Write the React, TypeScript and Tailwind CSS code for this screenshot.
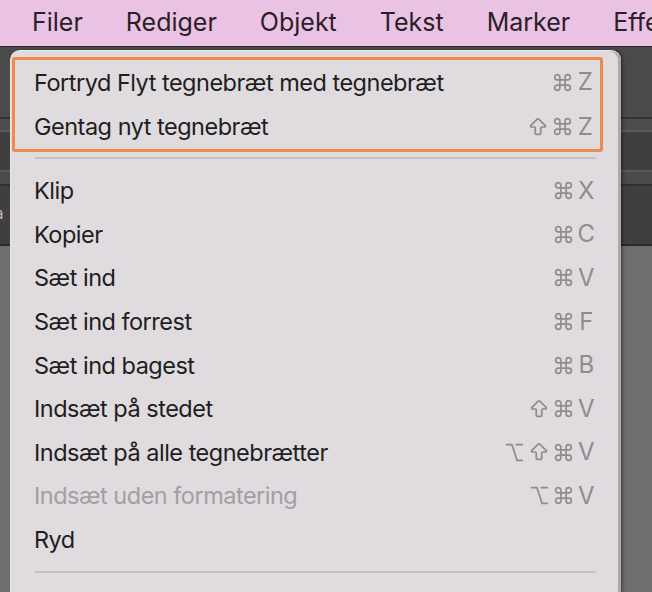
import React from 'react';
import { Command, ArrowBigUp, Option } from 'lucide-react';

type Item = { label: string; keys: string[]; disabled?: boolean };

const menuBar = ['Filer', 'Rediger', 'Objekt', 'Tekst', 'Marker', 'Effekt'];

const items: Item[] = [
  { label: 'Klip', keys: ['cmd', 'X'] },
  { label: 'Kopier', keys: ['cmd', 'C'] },
  { label: 'Sæt ind', keys: ['cmd', 'V'] },
  { label: 'Sæt ind forrest', keys: ['cmd', 'F'] },
  { label: 'Sæt ind bagest', keys: ['cmd', 'B'] },
  { label: 'Indsæt på stedet', keys: ['shift', 'cmd', 'V'] },
  { label: 'Indsæt på alle tegnebrætter', keys: ['opt', 'shift', 'cmd', 'V'] },
  { label: 'Indsæt uden formatering', keys: ['opt', 'cmd', 'V'], disabled: true },
  { label: 'Ryd', keys: [] },
];

const Keys: React.FC<{ keys: string[] }> = ({ keys }) => (
  <div className="flex items-center gap-[3px] text-[#8f8b8f]">
    {keys.map((k, i) => {
      if (k === 'cmd') return <Command key={i} size={21} strokeWidth={1.9} />;
      if (k === 'shift') return <ArrowBigUp key={i} size={22} strokeWidth={1.9} />;
      if (k === 'opt') return <Option key={i} size={21} strokeWidth={1.9} />;
      return (
        <span key={i} className="w-[18px] text-center text-[24px] leading-none">
          {k}
        </span>
      );
    })}
  </div>
);

const Row: React.FC<{ item: Item; className?: string }> = ({ item, className }) => (
  <div className={`flex items-center justify-between ${className ?? ''}`}>
    <span className={item.disabled ? 'text-[#a29ea2]' : 'text-[#211d20]'}>{item.label}</span>
    <Keys keys={item.keys} />
  </div>
);

const App: React.FC = () => {
  return (
    <div
      className="relative w-[652px] h-[592px] overflow-hidden bg-[#6e6e6e]"
      style={{ fontFamily: 'Inter, "Noto Sans", "DejaVu Sans", sans-serif' }}
    >
      {/* menu bar */}
      <div className="flex h-[47px] items-center gap-[43px] bg-[#eac3e4] pl-[32px] text-[25px] text-[#2a2028] border-b-[1px] border-[#2e2a2e] whitespace-nowrap">
        {menuBar.map((m) => (
          <span key={m}>{m}</span>
        ))}
      </div>

      {/* window behind the menu */}
      <div className="flex flex-col">
        <div className="h-[70px] bg-[#4a4a4a]" />
        <div className="h-[2px] bg-[#333333]" />
        <div className="h-[11px] bg-[#4c4c4c]" />
        <div className="h-[2px] bg-[#5c5c5c]" />
        <div className="h-[38px] bg-[#3f3f3f]" />
        <div className="h-[2px] bg-[#5a5a5a]" />
        <div className="h-[12px] bg-[#4a4a4a]" />
        <div className="h-[2px] bg-[#2f2f2f]" />
        <div className="flex h-[58px] items-center bg-[#3f3f3f] text-[15px] text-[#bdbdbd]">
          <span className="ml-[-5px] mt-[-2px]">a</span>
        </div>
        <div className="h-[2px] bg-[#2a2a2a]" />
      </div>

      {/* dropdown */}
      <div className="absolute left-[10px] top-[50px] bottom-0 w-[611px] rounded-t-[10px] border-l border-t border-[#ece8ec] bg-[#dfdbdf] pt-[6px] text-[23.5px] tracking-[-0.5px] shadow-[inset_-3px_0_0_#aca8ac,2px_0_3px_rgba(0,0,0,0.35)]">
        <div className="ml-[1px] w-[591px] rounded-[3px] border-[3px] border-[#f08a4c]">
          <Row
            className="h-[44.5px] pl-[19px] pr-[6px]"
            item={{ label: 'Fortryd Flyt tegnebræt med tegnebræt', keys: ['cmd', 'Z'] }}
          />
          <Row
            className="h-[44.5px] pl-[19px] pr-[6px]"
            item={{ label: 'Gentag nyt tegnebræt', keys: ['shift', 'cmd', 'Z'] }}
          />
        </div>

        <div className="ml-[24px] mr-[25px] mt-[5px] h-[2px] bg-[#c5c1c5]" />

        <div className="mt-[10px] flex flex-col">
          {items.map((it) => (
            <Row key={it.label} item={it} className="h-[43.6px] pl-[23px] pr-[26px]" />
          ))}
        </div>

        <div className="ml-[24px] mr-[25px] mt-[10px] h-[2px] bg-[#c5c1c5]" />
      </div>
    </div>
  );
};

export default App;
